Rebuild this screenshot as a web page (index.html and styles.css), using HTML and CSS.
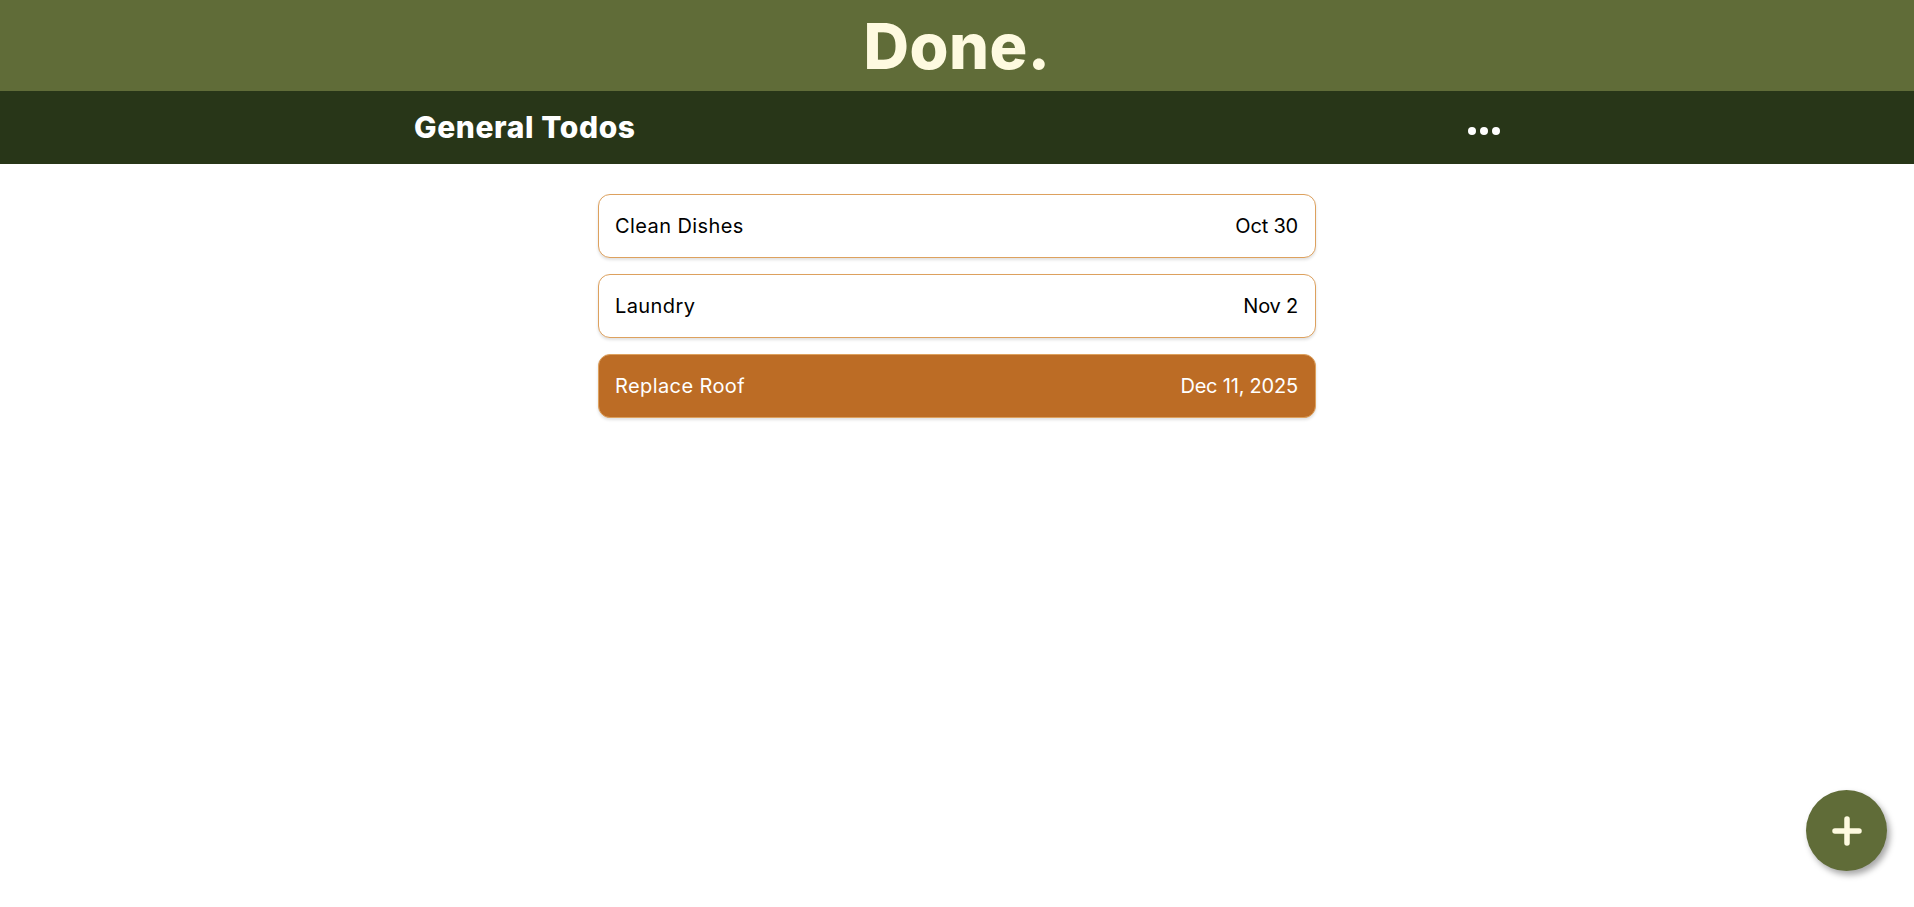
FILE: index.html
```html
<!DOCTYPE html>
<html lang="en">
<head>
<meta charset="utf-8">
<title>Done.</title>
<link rel="stylesheet" href="styles.css">
</head>
<body>
<header class="brand">
  <h1 class="brand-title">Done.</h1>
</header>
<nav class="listbar">
  <div class="listbar-inner">
    <h2 class="list-title">General Todos</h2>
    <button class="more" aria-label="More options"><span></span><span></span><span></span></button>
  </div>
</nav>
<main class="todos">
  <div class="todo"><span class="todo-name">Clean Dishes</span><span class="todo-date">Oct 30</span></div>
  <div class="todo"><span class="todo-name">Laundry</span><span class="todo-date">Nov 2</span></div>
  <div class="todo todo-overdue"><span class="todo-name">Replace Roof</span><span class="todo-date">Dec 11, 2025</span></div>
</main>
<button class="fab" aria-label="Add todo">
  <svg width="32" height="32" viewBox="0 0 32 32"><path d="M16 4v24M4 16h24" stroke="#fefae0" stroke-width="5.5" stroke-linecap="round" fill="none"/></svg>
</button>
</body>
</html>
```
FILE: styles.css
```css
* { box-sizing: border-box; }
html, body { margin: 0; padding: 0; }
body {
  font-family: Inter, "Noto Sans", sans-serif;
  background: #ffffff;
  height: 907px;
  overflow: hidden;
}
.brand {
  background: #606c38;
  height: 91px;
  display: flex;
  align-items: center;
  justify-content: center;
}
.brand-title {
  margin: 0;
  color: #fefae0;
  font-size: 63px;
  font-weight: 800;
  letter-spacing: 0.5px;
  line-height: 1;
  padding-top: 2px;
}
.listbar {
  background: #283618;
  height: 73px;
  display: flex;
  justify-content: center;
}
.listbar-inner {
  width: 1086px;
  display: flex;
  align-items: center;
  justify-content: space-between;
}
.list-title {
  margin: 0;
  color: #ffffff;
  font-size: 30px;
  font-weight: 800;
  line-height: 1;
  letter-spacing: 0.6px;
  padding-bottom: 2px;
}
.more {
  background: none;
  border: 0;
  padding: 0;
  display: flex;
  gap: 4px;
  margin-top: 6px;
}
.more span {
  width: 8px;
  height: 8px;
  border-radius: 50%;
  background: #ffffff;
  display: block;
}
.todos {
  width: 718px;
  margin: 30px auto 0;
  display: flex;
  flex-direction: column;
  gap: 16px;
}
.todo {
  height: 64px;
  border: 1px solid #dda15e;
  border-radius: 12px;
  background: #ffffff;
  display: flex;
  align-items: center;
  justify-content: space-between;
  padding: 0 17px 0 16px;
  font-size: 20px;
  letter-spacing: 0.4px;
  color: #000000;
  box-shadow: 0 2px 3px rgba(0,0,0,0.12);
}
.todo-date {
  letter-spacing: -0.2px;
}
.todo-overdue {
  background: #bc6c25;
  color: #ffffff;
}
.fab {
  position: fixed;
  right: 27px;
  bottom: 36px;
  width: 81px;
  height: 81px;
  border-radius: 50%;
  border: 0;
  background: #606c38;
  display: flex;
  align-items: center;
  justify-content: center;
  box-shadow: 3px 4px 6px rgba(0,0,0,0.35);
  padding: 0;
}
```
